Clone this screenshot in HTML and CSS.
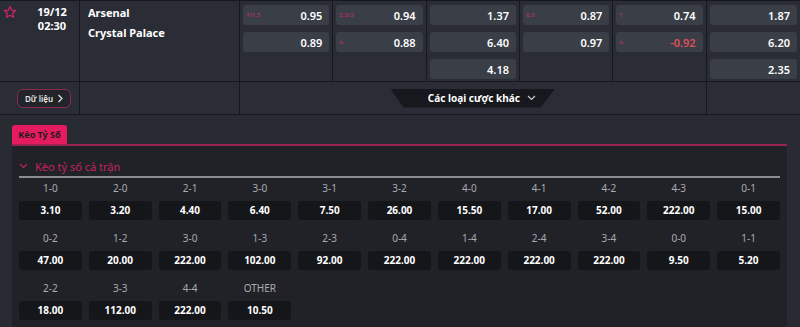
FILE: index.html
```html
<!DOCTYPE html>
<html lang="vi">

<head>
    <meta charset="UTF-8">
    <meta name="viewport" content="width=device-width, initial-scale=1.0">
    <title>Kèo Tỷ Số</title>
    <link rel="stylesheet" href="styles.css">
</head>

<body>
    <div class="match">
        <!-- hàng 1: thông tin trận -->
        <div class="cell time-cell">
            <svg class="star" width="14" height="14" viewBox="0 0 24 24">
                <path d="M12 2.5l2.9 6.3 6.9.7-5.2 4.6 1.5 6.8L12 17.4l-6.1 3.5 1.5-6.8L2.2 9.5l6.9-.7z" fill="none" stroke="#d6246a" stroke-width="2" stroke-linejoin="round"/>
            </svg>
            <div class="time">19/12<br>02:30</div>
        </div>
        <div class="cell teams">
            <div>Arsenal</div>
            <div>Crystal Palace</div>
        </div>
        <div class="cell odds">
            <div class="odd"><span class="hdp">1/1.5</span><span>0.95</span></div>
            <div class="odd"><span class="hdp"></span><span>0.89</span></div>
        </div>
        <div class="cell odds">
            <div class="odd"><span class="hdp">2.5/3</span><span>0.94</span></div>
            <div class="odd"><span class="hdp">u</span><span>0.88</span></div>
        </div>
        <div class="cell odds">
            <div class="odd"><span class="hdp"></span><span>1.37</span></div>
            <div class="odd"><span class="hdp"></span><span>6.40</span></div>
            <div class="odd"><span class="hdp"></span><span>4.18</span></div>
        </div>
        <div class="cell odds">
            <div class="odd"><span class="hdp">0.5</span><span>0.87</span></div>
            <div class="odd"><span class="hdp"></span><span>0.97</span></div>
        </div>
        <div class="cell odds">
            <div class="odd"><span class="hdp">1</span><span>0.74</span></div>
            <div class="odd"><span class="hdp">u</span><span class="neg">-0.92</span></div>
        </div>
        <div class="cell odds">
            <div class="odd"><span class="hdp"></span><span>1.87</span></div>
            <div class="odd"><span class="hdp"></span><span>6.20</span></div>
            <div class="odd"><span class="hdp"></span><span>2.35</span></div>
        </div>

        <!-- hàng 2 -->
        <div class="cell data-cell">
            <button class="data-btn">Dữ liệu
                <svg width="7" height="9" viewBox="0 0 7 9"><path d="M1.5 1l3.5 3.5L1.5 8" fill="none" stroke="#e6e6e6" stroke-width="1.2"/></svg>
            </button>
        </div>
        <div class="cell"></div>
        <div class="cell more-cell">
            <div class="more">Các loại cược khác
                <svg width="9" height="6" viewBox="0 0 9 6"><path d="M1 1l3.5 3.5L8 1" fill="none" stroke="#cfcfcf" stroke-width="1.1"/></svg>
            </div>
        </div>
        <div class="cell"></div>
    </div>

    <div class="section">
        <div class="tabs">
            <div class="tab">Kèo Tỷ Số</div>
        </div>
        <div class="panel">
            <div class="panel-title">
                <svg width="9" height="6" viewBox="0 0 9 6"><path d="M1 1l3.5 3.5L8 1" fill="none" stroke="#c4245c" stroke-width="1.1"/></svg>
                Kèo tỷ số cả trận
            </div>
            <div class="scores" id="scores"></div>
        </div>
    </div>

    <script>
        const scores = [
            ['1-0', '3.10'], ['2-0', '3.20'], ['2-1', '4.40'], ['3-0', '6.40'], ['3-1', '7.50'], ['3-2', '26.00'],
            ['4-0', '15.50'], ['4-1', '17.00'], ['4-2', '52.00'], ['4-3', '222.00'], ['0-1', '15.00'],
            ['0-2', '47.00'], ['1-2', '20.00'], ['3-0', '222.00'], ['1-3', '102.00'], ['2-3', '92.00'], ['0-4', '222.00'],
            ['1-4', '222.00'], ['2-4', '222.00'], ['3-4', '222.00'], ['0-0', '9.50'], ['1-1', '5.20'],
            ['2-2', '18.00'], ['3-3', '112.00'], ['4-4', '222.00'], ['OTHER', '10.50']
        ];
        const box = document.getElementById('scores');
        scores.forEach(([name, odd]) => {
            const el = document.createElement('div');
            el.className = 'score';
            el.innerHTML = '<div class="score-name">' + name + '</div><div class="score-odd">' + odd + '</div>';
            box.appendChild(el);
        });
    </script>
</body>

</html>
```

FILE: styles.css
```css
/* trang */
body,
html {
    margin: 0;
    padding: 0;
    font-family: "Noto Sans", "Open Sans", sans-serif;
    background-color: #292b32;
    color: #fff;
}

/* bảng trận đấu */
.match {
    display: grid;
    grid-template-columns: 80px 160px repeat(6, 1fr);
    grid-template-rows: 81px 33px;
    background-color: #2a2d35;
    border-top: 1px solid #16181c;
}

.cell {
    border-right: 1px solid #16181c;
    border-bottom: 1px solid #16181c;
    box-sizing: border-box;
}

.cell:nth-child(8),
.cell:last-child {
    border-right: none;
}

.time-cell {
    display: flex;
    align-items: flex-start;
    padding: 4px 0 0 3px;
}

.star {
    flex: none;
}

.time {
    width: 30px;
    margin-left: 20px;
    text-align: center;
    font-size: 11px;
    font-weight: 700;
    line-height: 14px;
}

.teams {
    padding: 2px 8px;
    font-size: 11px;
    font-weight: 700;
    line-height: 20px;
}

/* ô tỷ lệ */
.odds {
    display: flex;
    flex-direction: column;
    gap: 7px;
    padding: 4px 3px 0 3px;
}

.odd {
    height: 20px;
    display: flex;
    justify-content: space-between;
    align-items: center;
    padding: 0 7px 0 3px;
    background-color: #3a3e46;
    border-radius: 3px;
    font-size: 11px;
    font-weight: 600;
}

.hdp {
    font-size: 6px;
    color: #b83263;
}

.neg {
    color: #e0505a;
}

/* hàng 2 */
.data-cell {
    display: flex;
    align-items: center;
    padding-left: 17px;
}

.data-btn {
    display: flex;
    align-items: center;
    gap: 4px;
    height: 19px;
    padding: 0 6px 0 7px;
    background-color: #22242a;
    border: 1px solid #8a2a50;
    border-radius: 6px;
    color: #e6e6e6;
    font-family: inherit;
    font-size: 8px;
    font-weight: 600;
}

.more-cell {
    grid-column: span 5;
    display: flex;
    justify-content: center;
    align-items: center;
    border-right: 1px solid #16181c;
}

.more {
    width: 165px;
    height: 19px;
    display: flex;
    justify-content: center;
    align-items: center;
    gap: 7px;
    background-color: #16181d;
    clip-path: polygon(0 0, 100% 0, 91% 100%, 8% 100%);
    font-size: 10px;
    font-weight: 700;
    padding-left: 18px;
    box-sizing: border-box;
}

/* phần kèo tỷ số */
.section {
    padding: 10px 13px 0 12px;
}

.tabs {
    border-bottom: 2px solid #9b2352;
}

.tab {
    width: 55px;
    height: 19px;
    line-height: 19px;
    text-align: center;
    background-color: #e51b5f;
    color: #1b1b1f;
    border-radius: 3px 3px 0 0;
    font-size: 9px;
    font-weight: 700;
}

.panel {
    background-color: #212228;
    padding: 12px 7px 8px 7px;
}

.panel-title {
    display: flex;
    align-items: center;
    gap: 7px;
    color: #c4245c;
    font-size: 11px;
    height: 16px;
    border-bottom: 2px solid #8b8d93;
    padding-bottom: 2px;
}

.scores {
    display: grid;
    grid-template-columns: repeat(11, 1fr);
    column-gap: 7px;
    row-gap: 9px;
    padding-top: 1px;
}

.score {
    text-align: center;
}

.score-name {
    font-size: 10px;
    color: #a9abb0;
    height: 18px;
    line-height: 18px;
}

.score-odd {
    margin-top: 4px;
    height: 19px;
    line-height: 19px;
    background-color: #15161a;
    border-radius: 3px;
    font-size: 10px;
    font-weight: 700;
}
```
